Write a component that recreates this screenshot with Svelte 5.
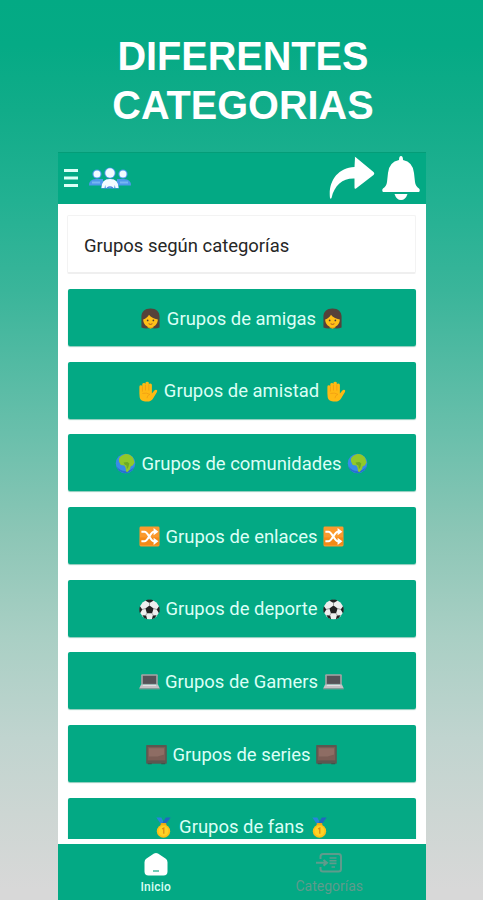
<script>
  const groups = [
    ['amigas', 'woman'],
    ['amistad', 'hand'],
    ['comunidades', 'globe'],
    ['enlaces', 'shuffle'],
    ['deporte', 'ball'],
    ['Gamers', 'laptop'],
    ['series', 'tv'],
    ['fans', 'medal'],
  ];
</script>

{#snippet emoji(kind)}
  <svg class="emoji" viewBox="0 0 22 22" aria-hidden="true">
    {#if kind === 'woman'}
      <path d="M1.500 20.500V9C1.500 4 5 .500 11 .500S20.500 4 20.500 9v11.500q-4 1.500-9.500.500-5.500 1-9.500-.5Z" fill="#55423a" />
      <path d="M8 17h6v3.500l-3 1.200-3-1.200Z" fill="#eda313" />
      <path d="M3.300 12C6 11 8.500 9 9.400 7c2 3 5 4 9.300 5-.2 5-3.700 8.100-7.700 8.100S3.500 17 3.300 12Z" fill="#ffc018" />
      <circle cx="8" cy="13" r=".9" fill="#493a32" />
      <circle cx="14" cy="13" r=".9" fill="#493a32" />
      <path d="M9 16.500q2 1.400 4 0" stroke="#a4522a" fill="none" />
    {:else if kind === 'hand'}
      <path d="M2.500 13V6q0-1.500 1.500-1.500T5.500 6V3.500Q5.700 2 7.200 2t1.600 1.300V2.200Q9 .700 10.700.700t1.700 1.500v1.500q.2-1.300 1.700-1.200t1.500 1.600V13l2.600-3q1.400-1.400 2.500-.5.900.8.200 2L17 18q-2 3.500-6.500 3.500H8.500Q3.500 21 2.800 17Z" fill="#ffb914" />
      <path d="M5.700 6v5M8.900 4v6M12.400 4v6M5.500 13q5-1 8 1-3 1-3 4" stroke="#f09b12" fill="none" stroke-width=".8" />
    {:else if kind === 'globe'}
      <circle cx="11" cy="11" r="10.200" fill="#398be8" />
      <path d="M1.400 14q2 7 9.600 7.200Q18 21 20.600 14 17 19 11 19 5 19 1.400 14Z" fill="#2970cf" />
      <path d="M4 6Q6 2 11 1q5-.3 8 4l1.600 5-2 3-2 1-1 3-2.500 3-1.500-.5-.5-4-1.200-2.500-3.900-.5-1.800-3.500Z" fill="#91c92a" />
      <path d="m9 10 4-.5 2 1.500-1 4-1.500 2-.5-4-2-1Z" fill="#6caa28" />
    {:else if kind === 'shuffle'}
      <rect x=".5" y=".5" width="21" height="21" rx="1.500" fill="#fb9a2d" />
      <path d="M1 12h20v8H1Z" fill="#f58a18" />
      <g fill="none" stroke="white" stroke-width="2.200">
        <path d="M2.500 6h3.200c4 0 6 10 10 10h2" />
        <path d="M2.500 16h3.200c4 0 6-10 10-10h2" />
      </g>
      <path d="m15.300 2.200 5 3.800-5 3.800Zm0 10 5 3.800-5 3.800Z" fill="white" />
    {:else if kind === 'ball'}
      <circle cx="11" cy="11" r="10.300" fill="#eee" />
      <path d="m11 6.800 4.300 3.100-1.600 5H8.300l-1.600-5Z" fill="#222" />
      <path d="m6.500 1.500 4.500 2.700 4.500-2.700Q11-.4 6.500 1.500ZM1 7.500 3.500 11 1 15Q-.4 11 1 7.500ZM21 7.500 18.500 11l2.500 4Q22.400 11 21 7.500ZM3.500 17l4 .2 1 4q-3.500-.7-5-4.200Zm15 0-4 .2-1 4q3.500-.7 5-4.200Z" fill="#222" />
      <path d="M11 7V3M7 10l-4 1M15 10l4 1M8.300 15l-1.500 2.500M13.700 15l1.500 2.500" stroke="#777" stroke-width=".7" />
    {:else if kind === 'laptop'}
      <path d="M3.300 3.500h15.400q1 0 1 1V14H2.300V4.500q0-1 1-1Z" fill="#a6a3a5" />
      <path d="M4 5h14v8.500H4Z" fill="#555358" />
      <path d="M2.300 14h17.400l2 4H.300Z" fill="#c5c1c5" />
      <path d="M.300 18h21.400v1.200H.300Z" fill="#94979a" />
      <path d="M4 15.200h14" stroke="#e5e1e4" />
    {:else if kind === 'tv'}
      <rect x=".2" y="1" width="21.600" height="19.800" rx=".8" fill="#5b5750" />
      <rect x="1.800" y="3.200" width="18.400" height="14" fill="#7b5d55" />
      <path d="M3 4.500h16V11L12 13H3Z" fill="#94736a" opacity=".75" />
      <path d="M2 20.200h4v1H2Zm14 0h4v1h-4Z" fill="#424c45" />
    {:else}
      <path d="M3.500.500h5.200l3 6-2 3Z" fill="#2686dd" />
      <path d="M18.500.500h-5l-4.500 7 3 2Z" fill="#2167bf" />
      <rect x="8" y="6.400" width="6" height="3.500" rx="1" fill="#eba914" />
      <circle cx="11" cy="14.800" r="7" fill="#fdbf16" />
      <circle cx="11" cy="14.600" r="5.200" fill="#ffd226" />
      <path d="m9.500 12.600 1.800-1v6" fill="none" stroke="#d88b13" stroke-width="1.300" />
    {/if}
  </svg>
{/snippet}

<main>
  <h1>DIFERENTES<br />CATEGORIAS</h1>
  <div class="phone">
    <header>
      <svg class="menu" viewBox="0 0 14 20"><path d="M0 2.500h14M0 10h14M0 17.500h14" stroke="#dcfff6" stroke-width="3" /></svg>
      <svg class="people" viewBox="0 0 42 24">
        <g fill="#4d98eb">
          <circle cx="8" cy="7" r="4.600" /><circle cx="34" cy="7" r="4.600" /><circle cx="21" cy="6" r="5.600" />
          <path d="M0 18.500q0-6.500 7-6.500h7v6.500Zm28-6.500h7q7 0 7 6.500H28ZM12 21.500q0-9.500 9-9.500t9 9.500Z" />
        </g>
        <g fill="#f2fbff"><circle cx="8" cy="7" r="3.500" /><circle cx="34" cy="7" r="3.500" /><circle cx="21" cy="6" r="4.700" /><path d="M12.500 21q0-9 8.500-9t8.500 9h-3l-.7-3-.7 3h-8.200l-.7-3-.7 3Z" /></g>
        <path d="M3 15.500h8m20 0h8" stroke="#76b6f4" stroke-width="2" />
        <path d="M18 21q3-2 6 0" stroke="#4d87e2" fill="none" stroke-width="1.300" />
      </svg>
      <svg class="share" viewBox="0 0 46 44"><path d="M26 1.500Q25 0 27 1.500L44.500 16q1.500 1.500 0 3L27 32.500q-1.500.8-1.500-1V22.500C14 22 5.500 29 2.500 42q-1 1.500-1.500 0C-1 26 8 12 25.500 11Z" fill="white" /></svg>
      <svg class="bell" viewBox="0 0 38 46"><path d="M19 1q2 0 2 4 10 2 11 13l1 9q.5 4 4 6.500 1.500 1.500 0 3.500H1q-1.500-2 0-3.500Q4.500 31 5 27l1-9Q7 7 17 5q0-4 2-4ZM12.500 39h13q-2 6-6.500 6t-6.500-6Z" fill="white" /></svg>
    </header>
    <section>
      <div class="heading"><span>Grupos según categorías</span></div>
      {#each groups as [name, kind]}
        <button>{@render emoji(kind)}<span>Grupos de {name}</span>{@render emoji(kind)}</button>
      {/each}
    </section>
    <nav>
      <div class="tab active">
        <svg viewBox="0 0 28 24"><path d="M12 1.500q2-1 4 0l7.500 5q2 1.300 2 3.700v9.300q0 4-4 4h-15q-4 0-4-4v-9.300q0-2.400 2-3.700Z" fill="white" /><path d="M11 19h6" stroke="#52bfa5" stroke-width="1.600" /></svg>
        <span>Inicio</span>
      </div>
      <div class="tab">
        <svg viewBox="0 0 28 24"><g fill="none" stroke="#5f9b8c" stroke-width="2"><path d="M5.500 7V4.500q0-2.500 2.500-2.500h15.500Q26 2 26 4.500v12.500q0 2.500-2.500 2.500H8q-2.500 0-2.500-2.500v-2M1 10.800h10M8.500 8l3.500 2.800-3.500 2.800" /><path d="M14.500 6h7M14.500 8.700h7M14.500 11.400h7M16.500 15h3.500" stroke-width="1.600" /></g></svg>
        <span>Categorías</span>
      </div>
    </nav>
  </div>
</main>

<style>
  :global(body) { margin: 0; }
  main { box-sizing: border-box; width: 483px; height: 900px; overflow: hidden; padding-top: 32px; background: linear-gradient(#03aa84 0, #05aa85 45px, #11ac89 110px, #22b192 200px, #3ab59a 291px, #69bfab 432px, #8cc6b6 534px, #a9cfc4 636px, #c0d4cf 738px, #cdd6d3 814px, #d8d8d8 890px); font-family: Roboto, sans-serif; }
  h1 { height: 120px; margin: 0; padding-left: 3px; color: white; font: bold 41.500px/48.500px "Liberation Sans", sans-serif; text-align: center; transform: scaleX(.955); }
  .phone { width: 368px; height: 748px; margin-left: 58px; display: flex; flex-direction: column; background: white; }
  header { height: 52px; flex: none; box-sizing: border-box; display: flex; align-items: flex-start; padding: 3px 6px 0 6px; background: #03a984; border-top: 1px solid #049d78; }
  .menu { width: 14px; height: 20px; margin-top: 12px; }
  .people { width: 42px; height: 24px; margin: 11px 0 0 11px; }
  .share { width: 46px; height: 44px; margin-left: auto; }
  .bell { width: 38px; height: 46px; margin-left: 7px; margin-top: -1px; }
  section { height: 635px; flex: none; box-sizing: border-box; overflow: hidden; padding: 11px 10px 0 9px; display: flex; flex-direction: column; }
  .heading { box-sizing: border-box; height: 59px; flex: none; display: flex; align-items: center; padding: 3px 0 0 16px; margin-bottom: 15px; border: 1px solid #f3f3f3; border-bottom: 2px solid #efefef; border-radius: 2px; color: #262626; font-size: 18.450px; }
  button { width: 348px; height: 57px; flex: none; margin: 0 0 15.700px .5px; padding: 2px 0 0; border: 0; border-radius: 2px; display: flex; align-items: center; justify-content: center; gap: 5.500px; background: #03a984; box-shadow: 0 1px 1px #8bcbbb; color: #dcfff6; font: 18.450px Roboto, sans-serif; white-space: nowrap; }
  .emoji { width: 21px; height: 21px; flex: none; }
  nav { height: 56px; box-sizing: border-box; flex: none; margin-top: 5px; padding: 0 10px 0 11px; display: flex; background: #03a984; color: #5f9b8c; }
  .tab { flex: 1; display: flex; flex-direction: column; align-items: center; padding-top: 8px; font-size: 14px; line-height: 18px; }
  .active { color: #d8fff4; font-size: 12px; font-weight: 500; letter-spacing: .2px; }
  .tab svg { width: 28px; height: 24px; }
  .active svg { margin-left: 1px; }
  .tab:not(.active) span { margin-top: 1px; }
  .tab span { margin-top: 2px; }
</style>
